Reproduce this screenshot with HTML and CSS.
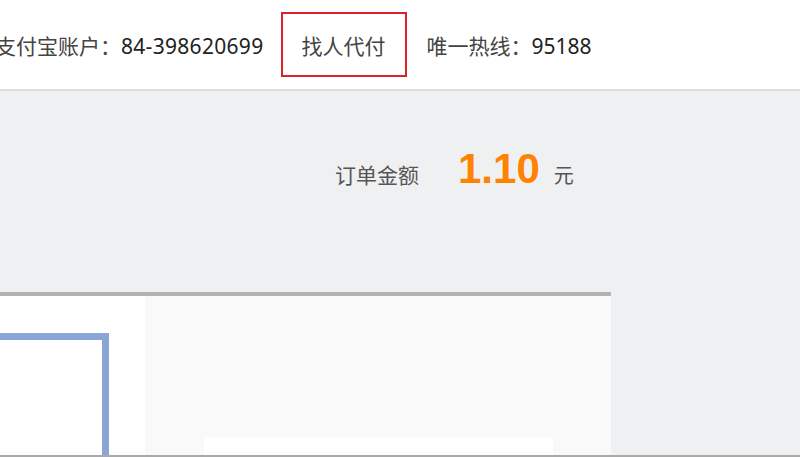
FILE: index.html
```html
<!DOCTYPE html>
<html lang="zh-CN">
<head>
    <meta charset="UTF-8">
    <meta name="viewport" content="width=device-width, initial-scale=1.0">
    <title>收银台</title>
    <link rel="stylesheet" href="styles.css">
</head>
<body>
    <div class="page">
        <header class="topbar">
            <div class="topbar-inner">
                <span class="account">支付宝账户：<span class="num">84-398620699</span></span>
                <a class="proxy-pay">找人代付</a>
                <span class="hotline">唯一热线：<span class="num">95188</span></span>
            </div>
        </header>

        <main class="main">
            <div class="order">
                <span class="order-label">订单金额</span>
                <span class="order-amount">1.10</span>
                <span class="order-unit">元</span>
            </div>

            <div class="pay-card">
                <div class="qr-side">
                    <div class="qr-frame"></div>
                </div>
                <div class="info-side">
                    <div class="info-box"></div>
                </div>
            </div>
        </main>
    </div>
</body>
</html>
```

FILE: styles.css
```css
html, body {
    margin: 0;
    padding: 0;
}
body {
    font-family: "Noto Sans", "Noto Sans CJK SC", sans-serif;
    background-color: #eff0f2;
    color: #333;
}
.page {
    height: 457px;
    box-sizing: border-box;
    border-bottom: 2px solid #a9a9a9;
    overflow: hidden;
}
.topbar {
    height: 89px;
    background-color: #fff;
    border-bottom: 2px solid #dcdcdc;
}
.topbar-inner {
    height: 100%;
    display: flex;
    align-items: center;
    margin-left: -5px;
    font-size: 21px;
    white-space: nowrap;
}
.account,
.hotline {
    color: #444;
}
.num {
    color: #222;
}
.account .num {
    letter-spacing: 0.3px;
}
.proxy-pay {
    display: flex;
    align-items: center;
    justify-content: center;
    width: 126px;
    height: 65px;
    box-sizing: border-box;
    margin: 0 20px 0 17px;
    border: 2px solid #d9232b;
    color: #444;
    cursor: pointer;
}
.order {
    height: 201px;
    box-sizing: border-box;
    padding: 57px 0 0 335px;
    display: flex;
    align-items: baseline;
}
.order-label {
    font-size: 21px;
    line-height: 1;
    color: #555;
}
.order-amount {
    margin: 0 14px 0 39px;
    font-family: "Liberation Sans", Arial, sans-serif;
    font-size: 42px;
    font-weight: bold;
    line-height: 1;
    color: #ff8200;
}
.order-unit {
    font-size: 20px;
    line-height: 1;
    color: #555;
}
.pay-card {
    width: 611px;
    height: 300px;
    display: flex;
    border-top: 4px solid #b3b3b3;
    background-color: #fff;
}
.qr-side {
    width: 145px;
    flex-shrink: 0;
}
.qr-frame {
    width: 207px;
    height: 207px;
    box-sizing: border-box;
    margin: 37px 0 0 -98px;
    border: 7px solid #8aa6d6;
}
.info-side {
    flex: 1;
    padding: 141px 58px 0 59px;
    background-color: #f9f9f9;
}
.info-box {
    height: 60px;
    background-color: #fff;
    border-radius: 6px;
}
```
